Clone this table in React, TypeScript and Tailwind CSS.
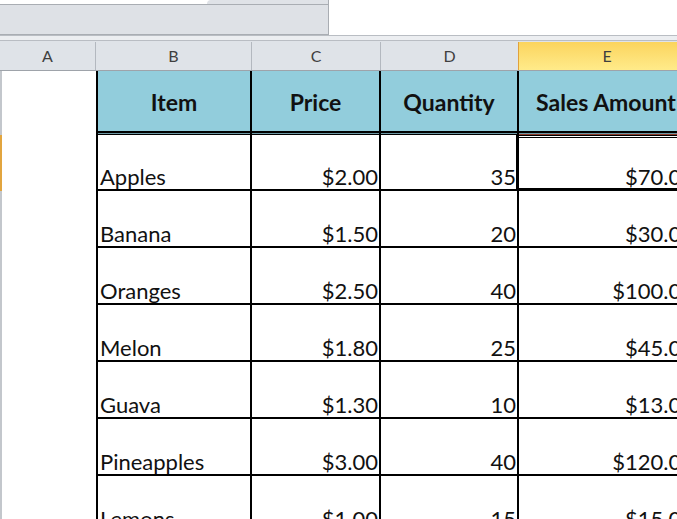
const rows = [
  { item: "Apples", price: "$2.00", qty: "35", amount: "$70.00" },
  { item: "Banana", price: "$1.50", qty: "20", amount: "$30.00" },
  { item: "Oranges", price: "$2.50", qty: "40", amount: "$100.00" },
  { item: "Melon", price: "$1.80", qty: "25", amount: "$45.00" },
  { item: "Guava", price: "$1.30", qty: "10", amount: "$13.00" },
  { item: "Pineapples", price: "$3.00", qty: "40", amount: "$120.00" },
  { item: "Lemons", price: "$1.00", qty: "15", amount: "$15.00" },
];

const font = "font-['Lato','Liberation_Sans',sans-serif]";

function HeaderCell({ label, w, edge = false, last = false }: { label: string; w: string; edge?: boolean; last?: boolean }) {
  return (
    <div className={`${w} flex h-[64px] shrink-0 flex-col border-r-2 border-black ${edge ? "border-l-2" : ""}`}>
      <div className="flex flex-1 items-center justify-center whitespace-nowrap bg-[#92cddc] pt-[3px] text-[23px] font-bold text-[#111]">{label}</div>
      <div className="h-[2px] bg-black" />
      <div className="h-[1px] bg-[#6d98a4]" />
      <div className={`h-[1px] ${last ? "bg-[#8e3b2b]" : "bg-black"}`} />
    </div>
  );
}

export default function App() {
  return (
    <div className={`h-[519px] w-[677px] overflow-hidden bg-white ${font}`}>
      {/* ribbon stub */}
      <div className="flex h-[35px]">
        <div className="flex w-[329px] flex-col border-r border-[#a9adb3]">
          <div className="flex h-[4px]">
            <div className="w-[207px] rounded-br-[6px] bg-white" />
            <div className="flex-1 rounded-tl-[8px] bg-[#dfe2e7]" />
          </div>
          <div className="flex-1 border-y border-[#a9adb3] bg-[#dee1e6]" />
        </div>
        <div className="flex-1" />
      </div>
      <div className="h-[6px] border-y border-[#b9bdc3] bg-[#eceef1]" />

      {/* column letters */}
      <div className="flex h-[30px] border-b border-[#9ea3aa] bg-[#dfe3e8] pt-[1px] text-[16px] text-[#3f3f3f]">
        <div className="flex w-[96px] shrink-0 items-center justify-center border-r border-[#b3b8bf]">A</div>
        <div className="flex w-[156px] shrink-0 items-center justify-center border-r border-[#b3b8bf]">B</div>
        <div className="flex w-[129px] shrink-0 items-center justify-center border-r border-[#b3b8bf]">C</div>
        <div className="flex w-[138px] shrink-0 items-center justify-center border-r border-[#e0a13c]">D</div>
        <div className="flex w-[176px] shrink-0 items-center justify-center bg-gradient-to-b from-[#fbd45c] to-[#ffeb8a]">E</div>
      </div>

      {/* table header */}
      <div className="flex">
        <div className="w-[96px] shrink-0 border-l-2 border-[#c3c7cc]" />
        <HeaderCell label="Item" w="w-[156px]" edge />
        <HeaderCell label="Price" w="w-[129px]" />
        <HeaderCell label="Quantity" w="w-[138px]" />
        <HeaderCell label="Sales Amount" w="w-[176px]" last />
      </div>

      {/* data rows */}
      {rows.map((r, i) => (
        <div key={r.item} className={`flex text-[22px] leading-none text-[#111] ${i === 0 ? "h-[56px]" : "h-[57px]"}`}>
          <div className={`w-[96px] shrink-0 border-l-2 ${i === 0 ? "border-[#e2a53f]" : "border-[#c3c7cc]"}`} />
          <div className="flex w-[156px] shrink-0 items-end border-x-2 border-b-2 border-black pb-[1px] pl-[2px]">{r.item}</div>
          <div className="flex w-[129px] shrink-0 items-end justify-end border-r-2 border-b-2 border-black pb-[1px] pr-[1px]">{r.price}</div>
          <div className="flex w-[138px] shrink-0 items-end justify-end border-r-2 border-b-2 border-black pb-[1px] pr-[1px]">{r.qty}</div>
          <div className="relative flex w-[176px] shrink-0 items-end justify-end border-b-2 border-black pb-[1px] pr-[1px]">
            {r.amount}
            {i === 0 && <div className="absolute -left-[3px] -bottom-[2px] top-0 right-0 border-[3px] border-double border-black" />}
          </div>
        </div>
      ))}
    </div>
  );
}
